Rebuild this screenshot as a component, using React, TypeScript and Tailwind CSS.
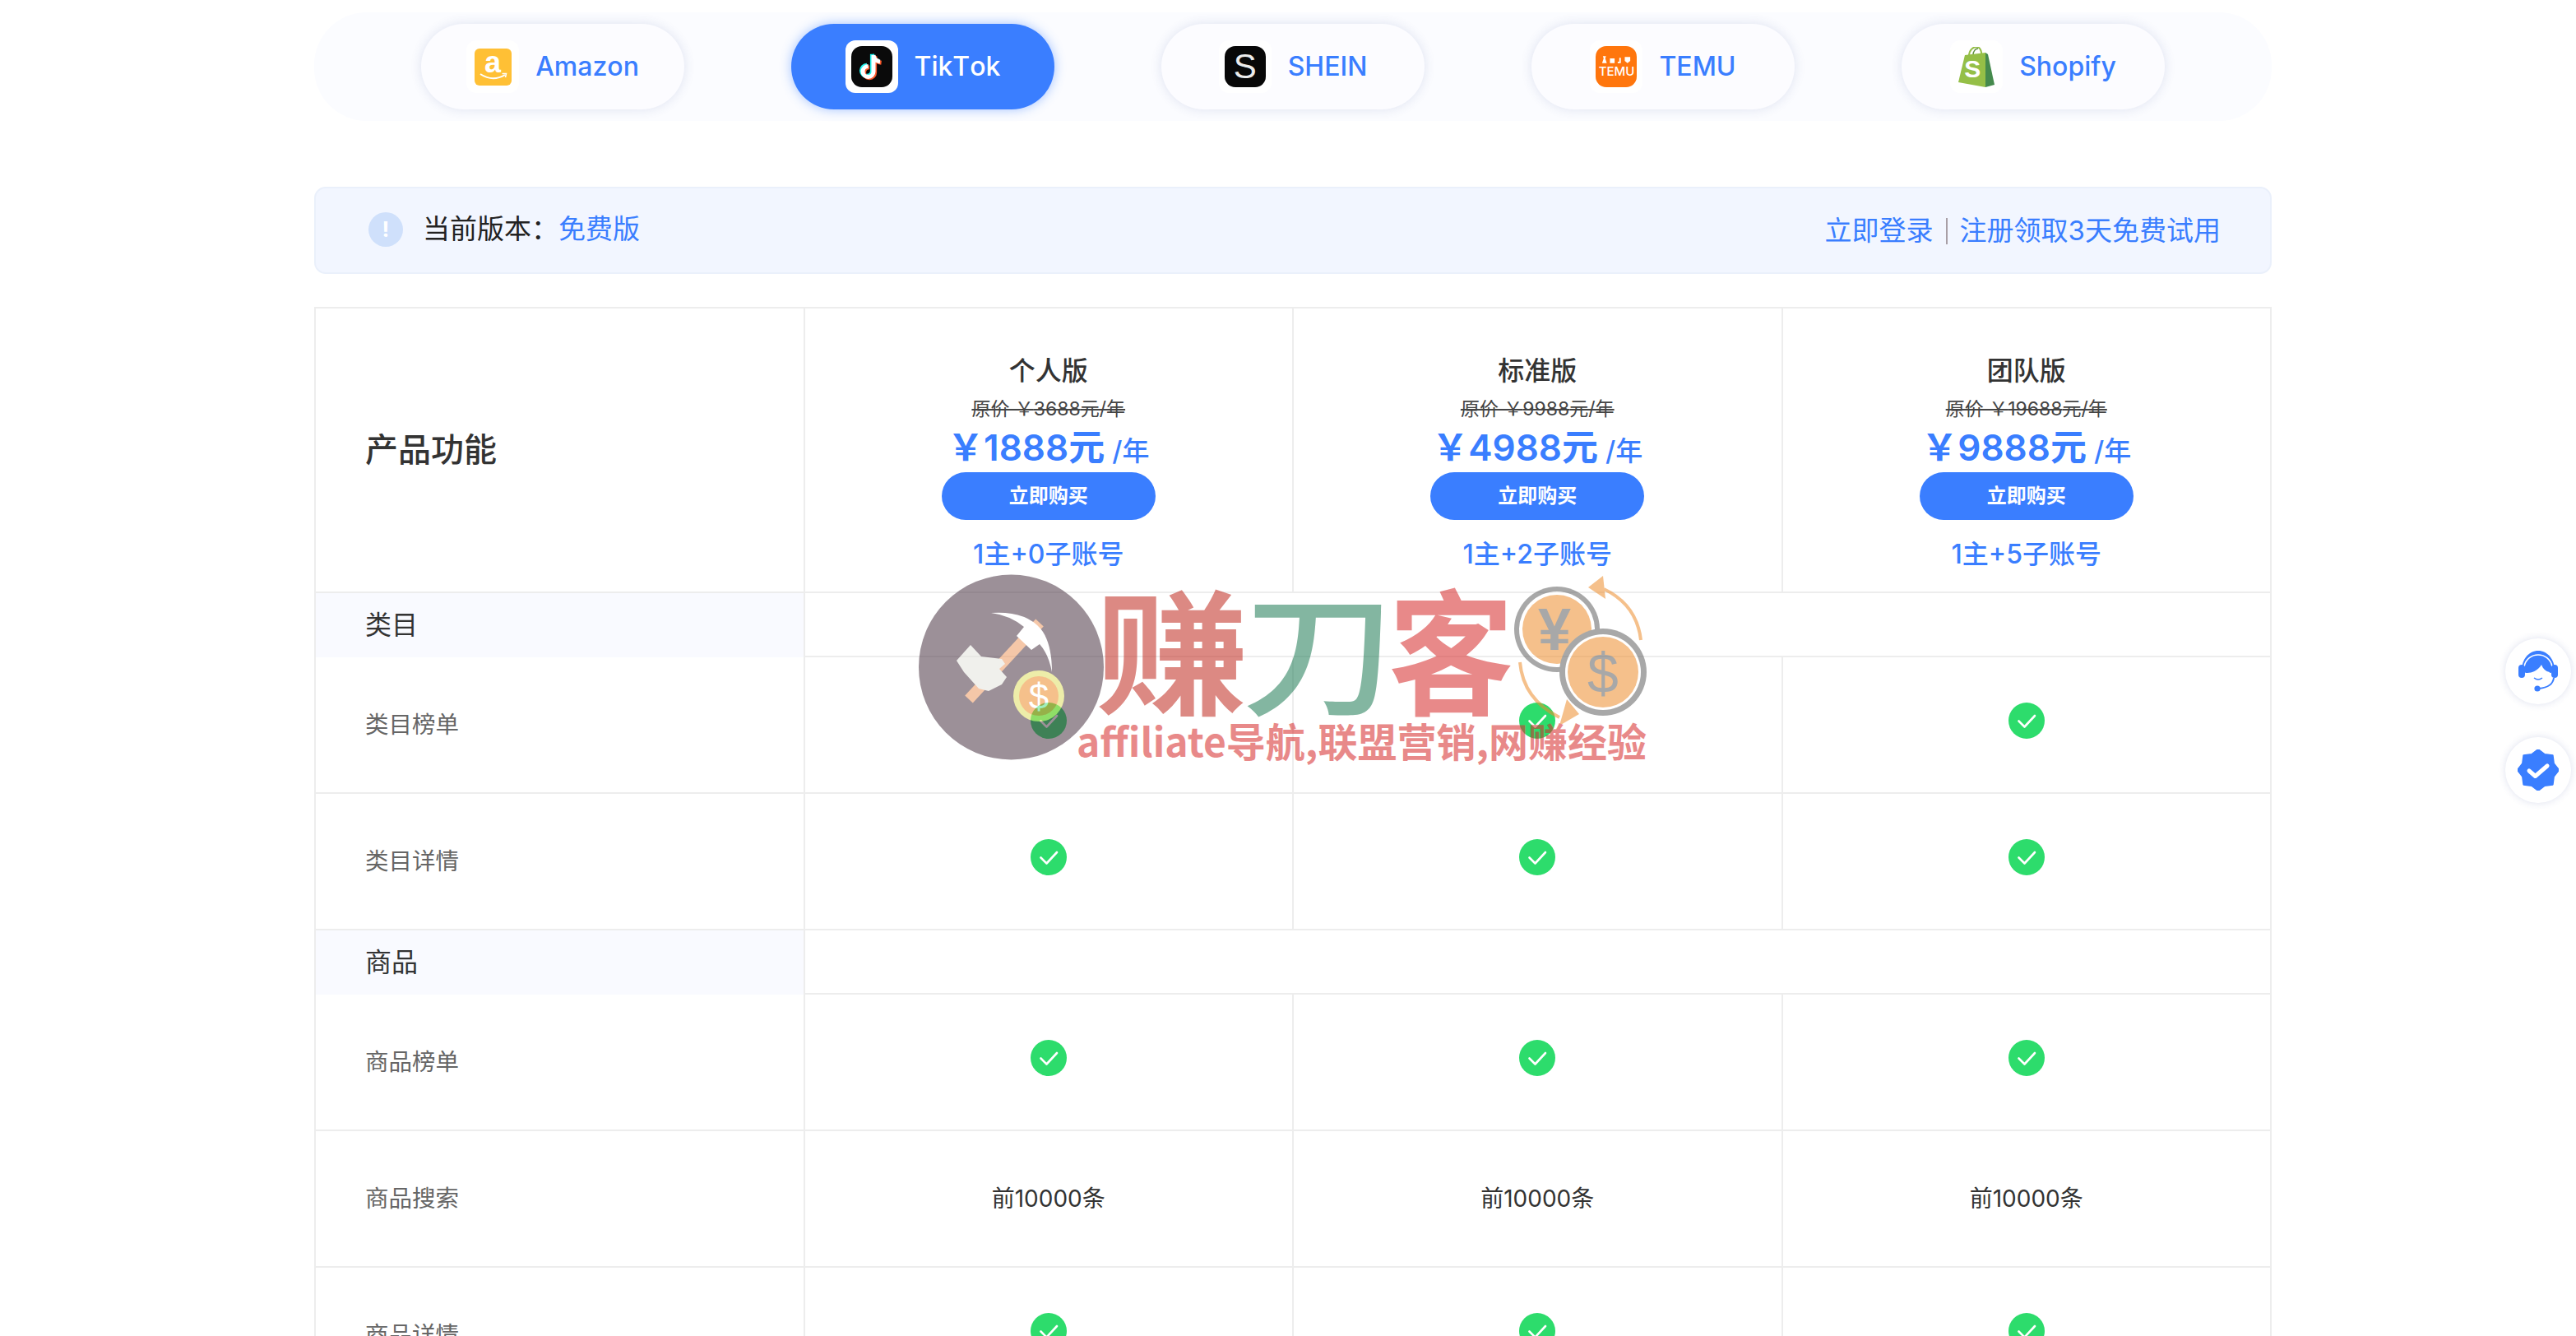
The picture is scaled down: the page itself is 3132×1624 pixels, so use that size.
import React from "react";

const BLUE = "#3a7eff";

function starPoints() {
  const pts: string[] = [];
  for (let i = 0; i < 16; i++) {
    const r = i % 2 === 0 ? 25 : 20.5;
    const a = (Math.PI * 2 * i) / 16 - Math.PI / 2;
    pts.push(`${(25 + r * Math.cos(a)).toFixed(2)},${(25 + r * Math.sin(a)).toFixed(2)}`);
  }
  return pts.join(" ");
}

function Check() {
  return (
    <svg viewBox="0 0 44 44" className="w-[44px] h-[44px] mb-[10px] block">
      <circle cx="22" cy="22" r="22" fill="#2ddc6c" />
      <path d="M12.5 22.5 L19.5 29.5 L32 16" fill="none" stroke="#fff" strokeWidth="2.6" strokeLinecap="round" strokeLinejoin="round" />
    </svg>
  );
}

function AmazonIcon() {
  return (
    <div className="relative w-[45px] h-[45px] rounded-[6px] bg-[#ffc035] flex justify-center">
      <span className="text-white font-bold text-[36px] leading-[34px] font-['Liberation_Sans',sans-serif]">a</span>
      <svg viewBox="0 0 45 45" className="absolute inset-0 w-[45px] h-[45px]">
        <path d="M7 31 Q22 41 37 32" fill="none" stroke="#fff" strokeWidth="2" />
        <path d="M33.5 30.5 L38.5 30.5 L37.5 35" fill="none" stroke="#fff" strokeWidth="1.5" />
      </svg>
    </div>
  );
}

function TikTokIcon() {
  const d = "M27 11 V31 a6.5 6.5 0 1 1 -6.5 -6.5 M27 11 c0.5 4.5 3.5 7.5 8 8";
  return (
    <div className="w-[50px] h-[50px] rounded-[13px] bg-[#0a0a0a]">
      <svg viewBox="0 0 50 50" className="w-[50px] h-[50px]">
        <path d={d} fill="none" stroke="#25f4ee" strokeWidth="5" transform="translate(-1.6,-1.2)" />
        <path d={d} fill="none" stroke="#fe5a2c" strokeWidth="5" transform="translate(1.6,1.2)" />
        <path d={d} fill="none" stroke="#fff" strokeWidth="5" />
      </svg>
    </div>
  );
}

function SheinIcon() {
  return (
    <div className="w-[50px] h-[50px] rounded-[13px] bg-[#080808] flex items-center justify-center">
      <span className="text-[#ececec] text-[42px] leading-none font-['Liberation_Sans',sans-serif]">S</span>
    </div>
  );
}

function TemuIcon() {
  return (
    <div className="w-[50px] h-[50px] rounded-[13px] bg-[#ff760d] flex flex-col items-center justify-center">
      <svg viewBox="0 0 40 10" className="w-[38px] h-[10px]">
        <path d="M3 0 L7 0 L6 3 L8 9 L2 9 L4 3Z M12 3 h6 v6 h-6Z M24 2 L26 2 L26 9 L22 9 L22 7 L24 7Z M31 1 h7 v5 l-3.5 3 l-3.5 -3Z" fill="#fff" />
      </svg>
      <span className="text-white text-[15px] leading-[17px] font-medium">TEMU</span>
    </div>
  );
}

function ShopifyIcon() {
  return (
    <div className="relative w-[44px] h-[49px]">
      <svg viewBox="0 0 44 49" className="absolute inset-0 w-[44px] h-[49px]">
        <path d="M13 11 C13 4 18 0 22 0 C26 0 28 4 28.5 10" fill="none" stroke="#95bf47" strokeWidth="2" />
        <path d="M18 10 C18 5 21 2 24 2" fill="none" stroke="#5e8e3e" strokeWidth="1.5" />
        <path d="M8 10 L33 7 L33 49 L0 43 Z" fill="#95bf47" />
        <path d="M33 7 L36 9 L44 46 L33 49 Z" fill="#458a4d" />
      </svg>
      <span className="absolute left-[7px] top-[11px] text-white font-bold text-[30px] leading-[32px] font-['Liberation_Sans',sans-serif]">S</span>
    </div>
  );
}

function Tab({ name, active, icon, iconBox }: { name: string; active?: boolean; icon: React.ReactNode; iconBox: string }) {
  return (
    <div
      className={
        active
          ? "w-[320px] h-[104px] rounded-[52px] bg-[#3a7eff] text-white shadow-[0_0_14px_rgba(58,126,255,0.45)] flex items-center justify-center gap-[20px]"
          : "w-[320px] h-[104px] rounded-[52px] bg-[#fcfcff] text-[#3a7eff] shadow-[0_0_14px_rgba(50,70,150,0.14)] flex items-center justify-center gap-[20px]"
      }
    >
      <div className={iconBox}>{icon}</div>
      <span className="text-[32px] font-medium leading-none [font-kerning:none]">{name}</span>
    </div>
  );
}

function PlanHead({ title, was, now, sub }: { title: string; was: string; now: string; sub: string }) {
  return (
    <div className="h-[346px] border-r-2 border-b-2 border-[#ededed] flex flex-col items-center pt-[58px]">
      <div className="text-[32px] leading-[36px] font-medium text-[#333]">{title}</div>
      <div className="mt-[13px] text-[23px] leading-[30px] text-[#444] line-through">原价 ￥{was}元/年</div>
      <div className="mt-[4px] h-[56px] leading-[56px] text-[#3a7eff] whitespace-nowrap">
        <span className="text-[44px] font-semibold">￥{now}元</span>
        <span className="text-[33px] font-medium ml-[9px]">/年</span>
      </div>
      <div className="mt-[2px] w-[260px] h-[58px] rounded-[29px] bg-[#3a7eff] text-white text-[24px] font-semibold flex items-center justify-center">立即购买</div>
      <div className="mt-[22px] text-[32px] leading-[40px] font-medium text-[#3a7eff]">{sub}</div>
    </div>
  );
}

function Section({ name }: { name: string }) {
  return (
    <>
      <div className="h-[78px] bg-[#f9faff] border-r-2 border-[#ededed] flex items-center pl-[60px] text-[32px] text-[#333]">{name}</div>
      <div className="col-span-3 h-[78px] border-r-2 border-b-2 border-[#ededed]" />
    </>
  );
}

function Row({ name, value }: { name: string; value?: string }) {
  const cell = "h-[166px] border-r-2 border-b-2 border-[#ededed] flex items-center justify-center";
  return (
    <>
      <div className="h-[166px] border-r-2 border-b-2 border-[#ededed] flex items-center pl-[60px] text-[28.5px] text-[#666]">{name}</div>
      {[0, 1, 2].map((i) => (
        <div key={i} className={cell}>
          {value ? <span className="text-[28px] text-[#333]">{value}</span> : <Check />}
        </div>
      ))}
    </>
  );
}

function Watermark() {
  return (
    <div className="absolute left-[1100px] top-[690px] w-[920px] h-[250px] opacity-[0.55] pointer-events-none z-10">
      <svg viewBox="1100 690 920 250" className="absolute inset-0 w-[920px] h-[250px]">
        <circle cx="1229.5" cy="811" r="112.5" fill="#4c3745" />
        <line x1="1264" y1="757" x2="1178" y2="850" stroke="#ee9a62" strokeWidth="13" />
        <path d="M1205 745 Q1250 742 1268 768 Q1279 785 1279 817 Q1275 795 1264 783 L1254 790 L1236 773 L1245 762 Q1228 748 1205 745Z" fill="#fff" />
        <path d="M1163 803 L1180 784 L1193 798 L1218 801 L1222 807 L1215 813 L1224 823 L1218 832 L1202 840 L1190 837 L1172 817Z" fill="#e4e4de" />
        <circle cx="1263" cy="846" r="31" fill="#e0e064" />
        <circle cx="1263" cy="846" r="24" fill="#ed8e2e" />
        <text x="1263" y="862" textAnchor="middle" fontSize="44" fill="#fff" fontFamily="'Liberation Sans',sans-serif">$</text>

        <path d="M1950 716 Q1990 735 1995 778" fill="none" stroke="#ed8e2e" strokeWidth="4" />
        <path d="M1931 714 L1949 700 L1952 728Z" fill="#ed8e2e" />
        <path d="M1848 805 Q1852 850 1896 872" fill="none" stroke="#ed8e2e" strokeWidth="4" />
        <path d="M1905 850 L1920 868 L1896 882Z" fill="#ed8e2e" />
        <circle cx="1893" cy="765" r="52" fill="#626262" />
        <circle cx="1893" cy="765" r="46" fill="#fff" />
        <circle cx="1893" cy="765" r="42" fill="#ed8e2e" />
        <text x="1890" y="790" textAnchor="middle" fontSize="72" fontWeight="700" fill="#626262" fontFamily="'Liberation Sans',sans-serif">¥</text>
        <circle cx="1949" cy="817" r="53" fill="#626262" />
        <circle cx="1949" cy="817" r="46" fill="#fff" />
        <circle cx="1949" cy="817" r="43" fill="#ed8e2e" />
        <text x="1949" y="842" textAnchor="middle" fontSize="68" fill="#626262" fontFamily="'Liberation Sans',sans-serif">$</text>
      </svg>
      <div className="absolute left-[232px] top-[2px] flex origin-center scale-y-[0.88] text-[186px] leading-[186px] font-bold font-['Noto_Sans_CJK_SC',sans-serif]">
        <span className="text-[#c12a1f]">赚</span>
        <span className="text-[#1f7c55] ml-[-8px] font-medium">刀</span>
        <span className="text-[#d72a2a] ml-[-8px] origin-left scale-x-[0.82]">客</span>
      </div>
      <div className="absolute left-[209px] top-[179px] text-[48px] leading-[60px] font-bold whitespace-nowrap text-[#d72a2a] font-['Noto_Sans_CJK_SC',sans-serif]">affiliate导航,联盟营销,网赚经验</div>
    </div>
  );
}

function FloatButtons() {
  return (
    <div className="absolute left-[3046px] top-[776px] flex flex-col gap-[40px] z-20">
      <div className="w-[80px] h-[80px] rounded-full bg-white shadow-[0_0_10px_rgba(50,70,150,0.16)] flex items-center justify-center">
        <svg viewBox="0 0 48 50" className="w-[48px] h-[50px]">
          <path d="M4 24 C4 10 13 0 24 0 C35 0 44 10 44 24 L39 27 L9 27Z" fill={BLUE} />
          <path d="M7 19 C9 10 16 5 24 5 C32 5 39 10 41 19" fill="none" stroke="#fff" strokeWidth="1.6" />
          <rect x="0" y="17" width="8" height="16" rx="4" fill={BLUE} />
          <rect x="40" y="17" width="8" height="16" rx="4" fill={BLUE} />
          <path d="M11 27 C16 27 24 24 28 17 C30 22 33 25 38 26 C38 34 31 41 24 41 C17 41 11 34 11 27Z" fill="#fff" />
          <path d="M19 33 Q24 37 29 33" fill="none" stroke={BLUE} strokeWidth="1.4" />
          <path d="M43 33 C42 41 35 45 25 46" fill="none" stroke={BLUE} strokeWidth="2" />
          <circle cx="23" cy="46" r="3.6" fill={BLUE} />
        </svg>
      </div>
      <div className="w-[80px] h-[80px] rounded-full bg-white shadow-[0_0_10px_rgba(50,70,150,0.16)] flex items-center justify-center">
        <svg viewBox="0 0 50 50" className="w-[50px] h-[50px]">
          <polygon points={starPoints()} fill={BLUE} stroke={BLUE} strokeWidth="2" strokeLinejoin="round" />
          <path d="M14 26 L21.5 32.5 L36 20" fill="none" stroke="#fff" strokeWidth="5" strokeLinecap="round" strokeLinejoin="round" />
        </svg>
      </div>
    </div>
  );
}

export default function App() {
  const box = "w-[64px] h-[64px] rounded-[12px] bg-white flex items-center justify-center";
  return (
    <div className="relative h-[1624px] overflow-hidden bg-white font-['Inter','Noto_Sans_CJK_SC',sans-serif]">
      <div className="w-[2380px] ml-[382px] pt-[15px]">
        <div className="h-[132px] rounded-[64px] bg-[#fbfcff] flex items-center justify-center gap-[130px]">
          <Tab name="Amazon" icon={<AmazonIcon />} iconBox={box} />
          <Tab name="TikTok" active icon={<TikTokIcon />} iconBox={box} />
          <Tab name="SHEIN" icon={<SheinIcon />} iconBox={box} />
          <Tab name="TEMU" icon={<TemuIcon />} iconBox={box} />
          <Tab name="Shopify" icon={<ShopifyIcon />} iconBox={box} />
        </div>

        <div className="mt-[80px] h-[106px] rounded-[14px] bg-[#f2f6ff] border-2 border-[#eaf0fb] flex items-center justify-between pl-[64px] pr-[60px]">
          <div className="flex items-center mb-[2px]">
            <div className="w-[42px] h-[42px] rounded-full bg-[#cfe0fb] flex items-center justify-center text-white text-[26px] font-bold leading-none">!</div>
            <span className="ml-[24px] text-[33px] text-[#222]">当前版本：</span>
            <span className="text-[33px] text-[#3a7eff]">免费版</span>
          </div>
          <div className="flex items-center text-[33px] text-[#3a7eff] mt-[2px]">
            <span>立即登录</span>
            <span className="w-[2px] h-[32px] bg-[#a89fa6] mx-[15px]" />
            <span>注册领取3天免费试用</span>
          </div>
        </div>

        <div className="mt-[40px] grid grid-cols-4 border-l-2 border-t-2 border-[#ededed]">
          <div className="h-[346px] border-r-2 border-b-2 border-[#ededed] flex items-center pl-[60px] text-[40px] font-medium text-[#333]">产品功能</div>
          <PlanHead title="个人版" was="3688" now="1888" sub="1主+0子账号" />
          <PlanHead title="标准版" was="9988" now="4988" sub="1主+2子账号" />
          <PlanHead title="团队版" was="19688" now="9888" sub="1主+5子账号" />
          <Section name="类目" />
          <Row name="类目榜单" />
          <Row name="类目详情" />
          <Section name="商品" />
          <Row name="商品榜单" />
          <Row name="商品搜索" value="前10000条" />
          <Row name="商品详情" />
        </div>
      </div>
      <Watermark />
      <FloatButtons />
    </div>
  );
}
